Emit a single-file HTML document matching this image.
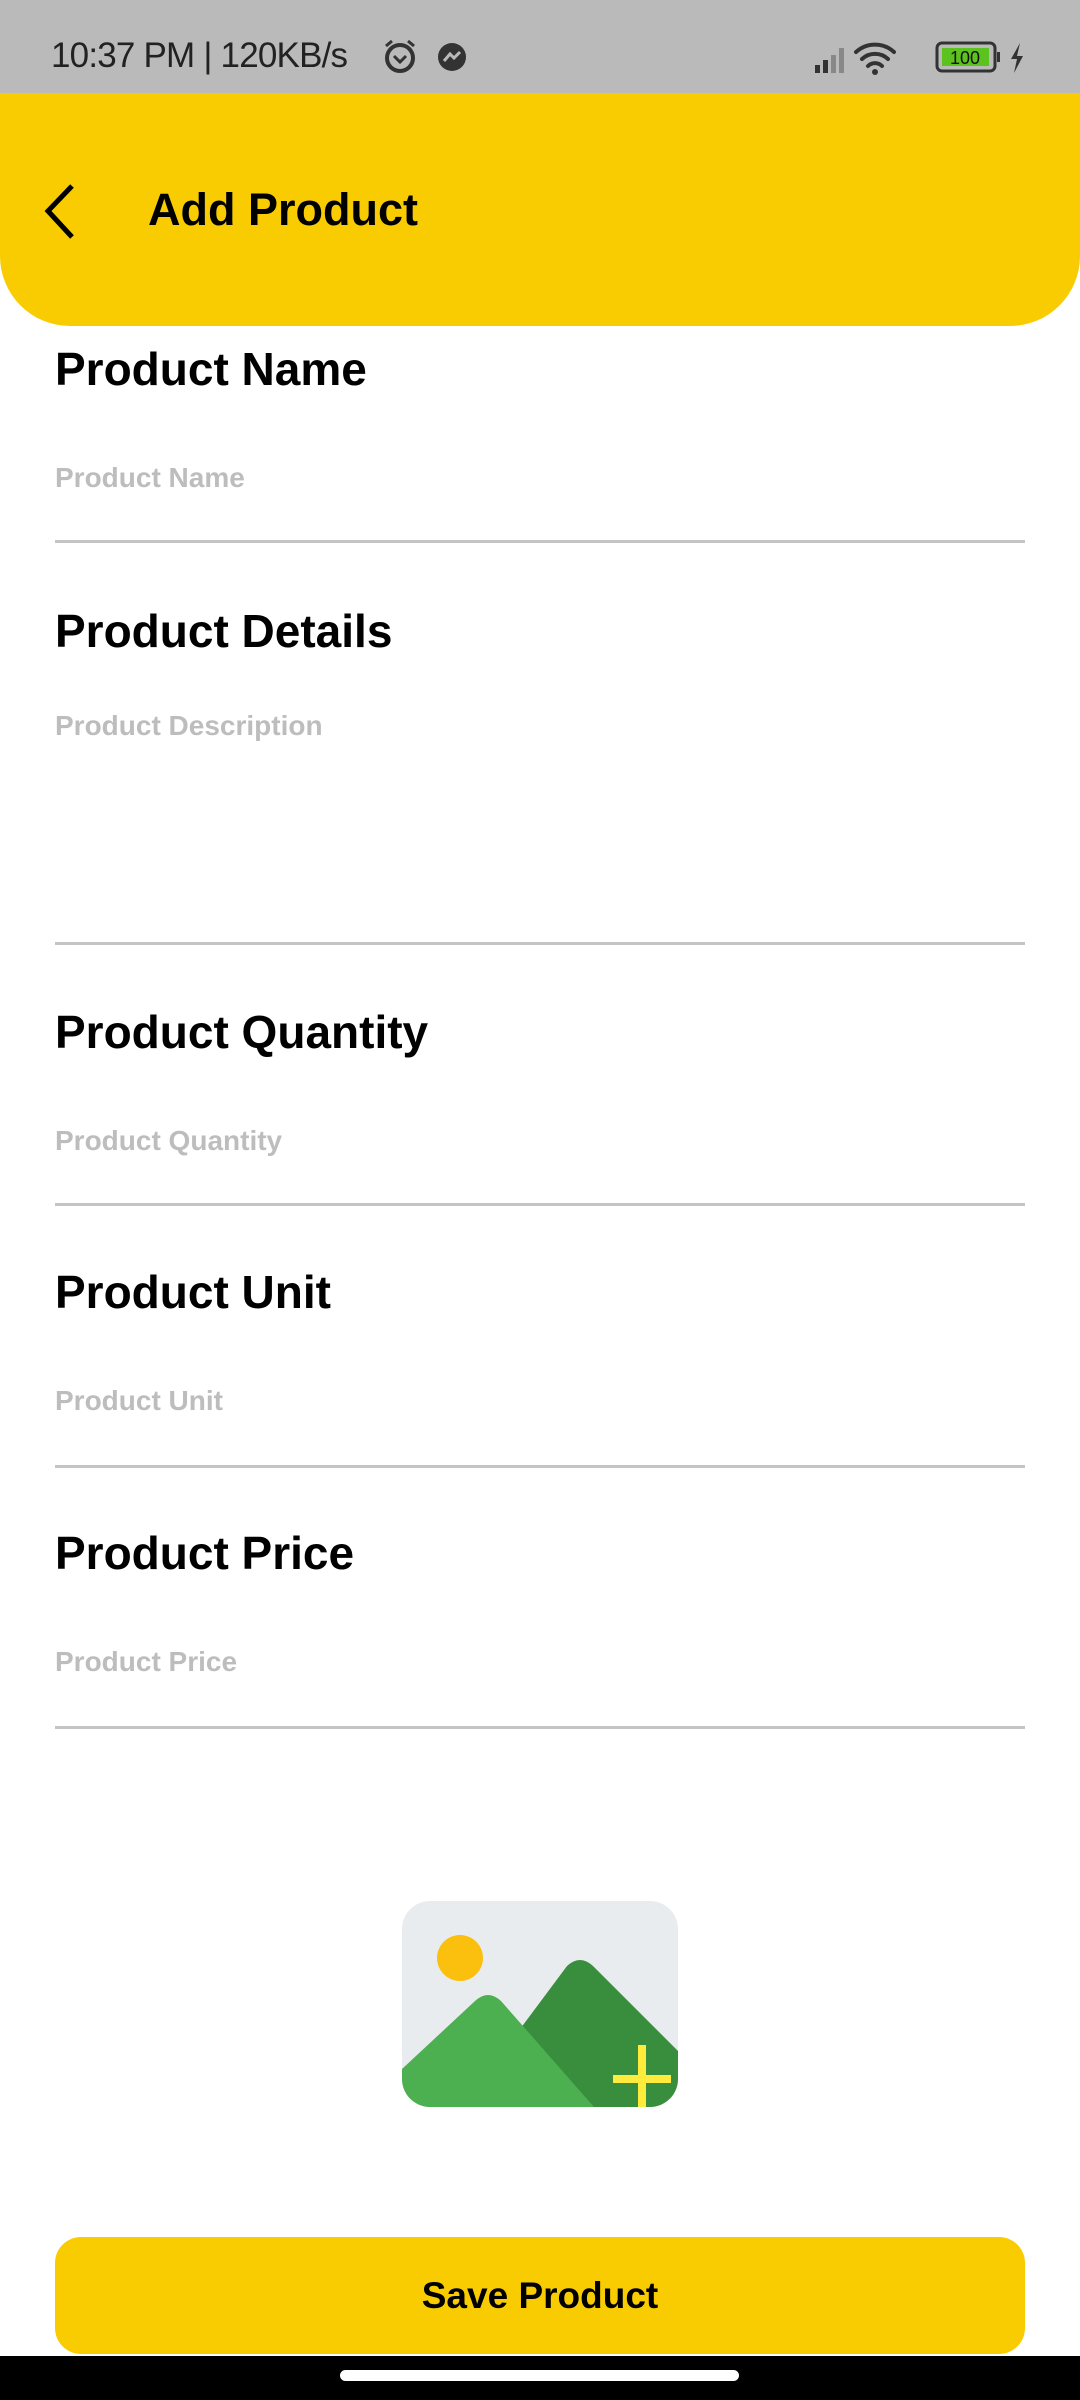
<!DOCTYPE html>
<html><head><meta charset="utf-8"><style>
*{margin:0;padding:0;box-sizing:border-box}
body{width:1080px;height:2400px;background:#fff;position:relative;overflow:hidden;font-family:"Liberation Sans",Roboto,sans-serif}
.sb{position:absolute;left:0;top:0;width:1080px;height:93px;background:#bababa}
.sbt{position:absolute;left:51px;top:36px;font-size:35px;color:#222;letter-spacing:-0.8px}
.hdr{position:absolute;left:0;top:93px;width:1080px;height:233px;background:#f8cc00;border-radius:0 0 70px 70px}
.title{position:absolute;left:148px;top:184px;font-size:45px;font-weight:bold;color:#000}
.lbl{position:absolute;left:55px;font-size:46px;font-weight:bold;color:#000;letter-spacing:0px}
.ph{position:absolute;left:55px;font-size:28px;color:#bdbdbd;font-weight:bold}
.ln{position:absolute;left:55px;width:970px;height:3px;background:#c4c4c4}
.btn{position:absolute;left:55px;top:2237px;width:970px;height:117px;background:#f8cc00;border-radius:26px;text-align:center;line-height:117px;font-size:37px;font-weight:bold;color:#000}
.nav{position:absolute;left:0;top:2356px;width:1080px;height:44px;background:#000}
.home{position:absolute;left:340px;top:2370px;width:399px;height:11px;border-radius:6px;background:#fff}
</style></head><body>
<div class="sb"></div>
<div class="sbt">10:37 PM | 120KB/s</div>
<svg style="position:absolute;left:380px;top:38px" width="90" height="40" viewBox="0 0 90 40">
<circle cx="20" cy="20" r="13" fill="none" stroke="#333" stroke-width="4"/>
<path d="M14 18l6 6 6-6" fill="none" stroke="#333" stroke-width="3"/>
<path d="M6 8l6-5M34 8l-6-5" stroke="#333" stroke-width="3"/>
<circle cx="72" cy="19" r="14" fill="#333"/>
<path d="M64 23l6-7 4 4 6-6" fill="none" stroke="#bababa" stroke-width="3"/>
</svg>
<svg style="position:absolute;left:810px;top:38px" width="225" height="40" viewBox="0 0 225 40">
<rect x="5" y="27" width="5" height="8" fill="#333"/><rect x="13" y="22" width="5" height="13" fill="#333"/>
<rect x="21" y="17" width="5" height="18" fill="#888"/><rect x="29" y="10" width="5" height="25" fill="#888"/>
<g fill="none" stroke="#333" stroke-width="4" stroke-linecap="round">
<path d="M46 14a28 28 0 0 1 38 0"/><path d="M52 21a19 19 0 0 1 26 0"/><path d="M58 28a10 10 0 0 1 14 0"/></g>
<circle cx="65" cy="34" r="3" fill="#333"/>
<rect x="127" y="5" width="58" height="28" rx="5" fill="none" stroke="#333" stroke-width="3"/>
<rect x="132" y="10" width="47" height="18" fill="#5cc21e"/>
<text x="155" y="26" font-size="18" text-anchor="middle" fill="#111" font-family="Liberation Sans">100</text>
<rect x="187" y="14" width="3" height="10" fill="#333"/>
<path d="M210 5l-9 16h6l-3 14 9-17h-6z" fill="#333"/>
</svg>
<div class="hdr"></div>
<svg style="position:absolute;left:40px;top:182px" width="40" height="60" viewBox="0 0 40 60"><path d="M32 4L8 29l24 26" fill="none" stroke="#000" stroke-width="5"/></svg>
<div class="title">Add Product</div>

<div class="lbl" style="top:342px">Product Name</div>
<div class="ph" style="top:462px">Product Name</div>
<div class="ln" style="top:540px"></div>

<div class="lbl" style="top:604px">Product Details</div>
<div class="ph" style="top:710px">Product Description</div>
<div class="ln" style="top:942px"></div>

<div class="lbl" style="top:1005px">Product Quantity</div>
<div class="ph" style="top:1125px">Product Quantity</div>
<div class="ln" style="top:1203px"></div>

<div class="lbl" style="top:1265px">Product Unit</div>
<div class="ph" style="top:1385px">Product Unit</div>
<div class="ln" style="top:1465px"></div>

<div class="lbl" style="top:1526px">Product Price</div>
<div class="ph" style="top:1646px">Product Price</div>
<div class="ln" style="top:1726px"></div>

<svg style="position:absolute;left:402px;top:1901px" width="276" height="206" viewBox="0 0 276 206">
<defs><clipPath id="c"><rect width="276" height="206" rx="28"/></clipPath></defs>
<g clip-path="url(#c)">
<rect width="276" height="206" fill="#e9ecef"/>
<circle cx="58" cy="57" r="23" fill="#fbbf0e"/>
<path d="M60 206L165 65q13-12 26 0L276 150V206z" fill="#388e3c"/>
<path d="M0 168L73 100q13-12 26 0L192 206H0z" fill="#4caf50"/>
<rect x="236" y="144" width="8" height="62" fill="#ffeb3b"/>
<rect x="211" y="174" width="58" height="8" fill="#ffeb3b"/>
</g></svg>

<div class="btn">Save Product</div>
<div class="nav"></div>
<div class="home"></div>
</body></html>
